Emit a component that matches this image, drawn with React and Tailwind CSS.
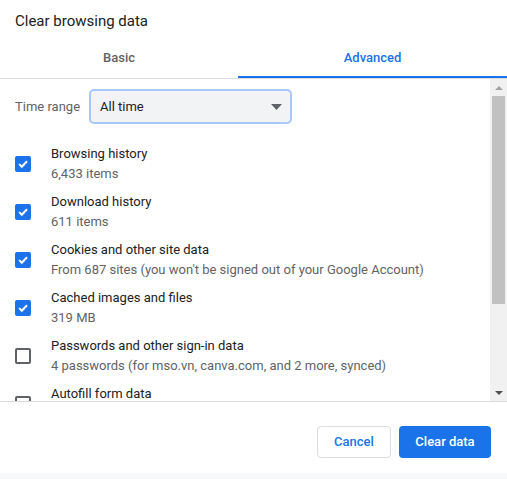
import React from "react";

const items = [
  { title: "Browsing history", sub: "6,433 items", checked: true },
  { title: "Download history", sub: "611 items", checked: true },
  {
    title: "Cookies and other site data",
    sub: "From 687 sites (you won't be signed out of your Google Account)",
    checked: true,
  },
  { title: "Cached images and files", sub: "319 MB", checked: true },
  {
    title: "Passwords and other sign-in data",
    sub: "4 passwords (for mso.vn, canva.com, and 2 more, synced)",
    checked: false,
  },
  { title: "Autofill form data", sub: "", checked: false },
];

const Checkbox = ({ checked }) =>
  checked ? (
    <div className="w-4 h-4 rounded-[2px] bg-[#1a73e8] flex items-center justify-center shrink-0">
      <svg width="12" height="12" viewBox="0 0 12 12">
        <path d="M2.2 6.1 L4.8 8.7 L10 3.3" stroke="#fff" strokeWidth="2" fill="none" />
      </svg>
    </div>
  ) : (
    <div className="w-4 h-4 rounded-[2px] border-2 border-[#5f6368] shrink-0" />
  );

export default function App() {
  return (
    <div className="w-[507px] h-[479px] bg-white flex flex-col font-['Roboto',sans-serif] overflow-hidden">
      <div className="pt-[11px] px-[15px] text-[15px] leading-[20px] text-[#202124]">
        Clear browsing data
      </div>

      <div className="mt-[7px] flex border-b border-[#dadce0]">
        <div className="w-[238px] h-[40px] flex items-center justify-center text-[13px] font-medium text-[#5f6368]">
          Basic
        </div>
        <div className="flex-1 h-[40px] flex items-center justify-center text-[13px] font-medium text-[#1a73e8] border-b-2 border-[#1a73e8] pt-[1px]">
          Advanced
        </div>
      </div>

      <div className="h-[322px] flex">
        <div className="flex-1 overflow-hidden">
          <div className="flex items-center pt-[10px] pl-[15px]">
            <span className="text-[13px] text-[#5f6368] w-[74px]">Time range</span>
            <div className="w-[203px] h-[35px] rounded-[5px] border-2 border-[#a8c7fa] bg-[#f1f3f4] flex items-center justify-between pl-[9px] pr-[8px]">
              <span className="text-[13px] text-[#202124]">All time</span>
              <svg width="11" height="6" viewBox="0 0 11 6">
                <path d="M0 0 H11 L5.5 6 Z" fill="#5f6368" />
              </svg>
            </div>
          </div>

          <div className="mt-[16px]">
            {items.map((it, i) => (
              <div key={i} className="h-[48px] flex items-center pl-[15px] gap-[20px]">
                <Checkbox checked={it.checked} />
                <div className="flex flex-col">
                  <span className="text-[13px] leading-[20px] text-[#202124]">{it.title}</span>
                  <span className="text-[13px] leading-[20px] text-[#5f6368]">{it.sub || "\u00a0"}</span>
                </div>
              </div>
            ))}
          </div>
        </div>

        <div className="w-[17px] bg-[#f1f1f1] flex flex-col items-center">
          <div className="h-[17px] flex items-center justify-center">
            <svg width="8" height="4" viewBox="0 0 8 4">
              <path d="M0 4 H8 L4 0 Z" fill="#a3a3a3" />
            </svg>
          </div>
          <div className="w-[13px] h-[208px] bg-[#c1c1c1]" />
          <div className="flex-1" />
          <div className="h-[17px] flex items-center justify-center">
            <svg width="8" height="4" viewBox="0 0 8 4">
              <path d="M0 0 H8 L4 4 Z" fill="#505050" />
            </svg>
          </div>
        </div>
      </div>

      <div className="border-t border-[#dadce0] flex justify-end gap-[8px] pt-[24px] pr-[16px] h-[72px]">
        <button className="w-[74px] h-[32px] rounded-[4px] border border-[#dadce0] bg-white text-[13px] font-medium text-[#1a73e8]">
          Cancel
        </button>
        <button className="w-[92px] h-[32px] rounded-[4px] bg-[#1a73e8] text-[13px] font-medium text-white">
          Clear data
        </button>
      </div>
      <div className="flex-1 bg-[#f8f9fa]" />
    </div>
  );
}
